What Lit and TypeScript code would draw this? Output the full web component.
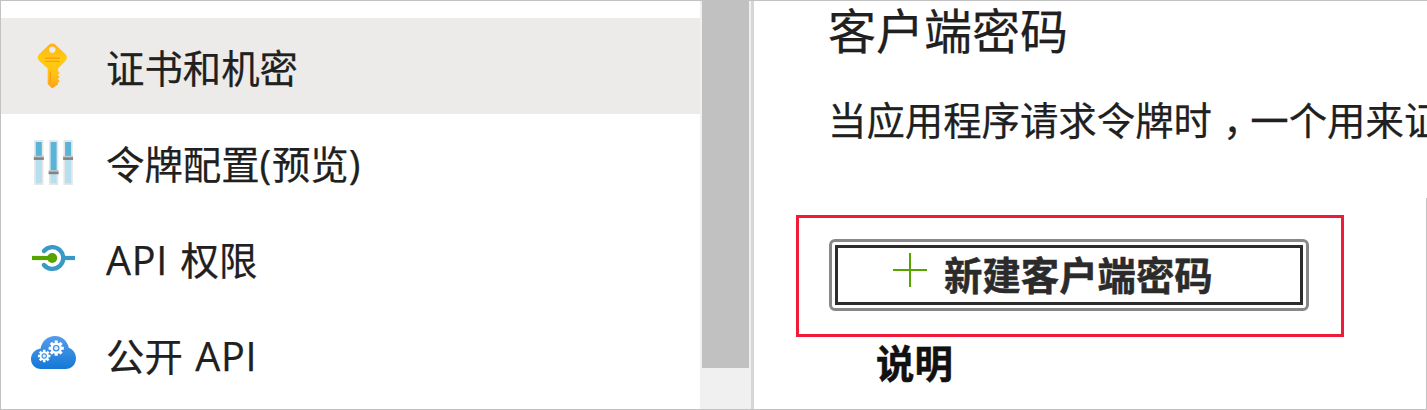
import { LitElement, html, css, svg } from "lit";
import { customElement } from "lit/decorators.js";
import { classMap } from "lit/directives/class-map.js";

const keyIcon = html`<svg class="icon" width="48" height="50" viewBox="0 0 48 50">
  <defs><linearGradient id="gold" x1="0" y1="0" x2="0" y2="1">
    <stop offset="0" stop-color="#ffb01c"/><stop offset=".35" stop-color="#ffcb10"/>
    <stop offset=".7" stop-color="#ffc213"/><stop offset="1" stop-color="#fea11b"/>
  </linearGradient></defs>
  <path fill="url(#gold)" fill-rule="evenodd" d="M20.3 3.5 Q23.3 1.3 26.3 3.5 L36.8 13.6 Q38.9 16.5 36.8 19.4 L29.1 27.4 V30 L30.7 32 L28.8 34 L30.7 36 L28.8 38 L30.7 40 L28.8 42 L29.3 43.3 L24.2 46.7 Q23.3 47.3 22.4 46.7 L18.7 43 V27.4 L9.8 19.4 Q7.7 16.5 9.8 13.6 Z M23.3 5.4 a3.3 3.3 0 1 0 .01 0 Z"/>
  <path d="M16.5 17.2H30.3M16.5 20.4H30.3" stroke="#f9a016" stroke-width="1.4" stroke-linecap="round"/>
  <path d="M21.3 31V42" stroke="#f9a016" stroke-width="1.5" stroke-linecap="round"/>
</svg>`;

const slider = (x: number, y: number) => svg`
  <rect x=${x} y="0" width="9.4" height="45" fill="#e6e6e6"/>
  <rect x=${x + 1.7} y="2" width="6" height=${y - 2} fill="#59b4d9"/>
  <rect x=${x + 1.7} y=${y} width="6" height=${43.3 - y} fill="#b8dff0"/>
  <rect x=${x - 0.3} y=${y - 1.2} width="10" height="1.6" fill="#c4c7c8"/>
  <rect x=${x - 0.3} y=${y + 0.3} width="10" height="2.6" fill="#7f8385"/>`;

const slidersIcon = html`<svg class="icon" width="48" height="45" viewBox="0 0 48 45">
  ${slider(5.1, 17)}${slider(19.9, 31.3)}${slider(34.4, 17)}
</svg>`;

const plugIcon = html`<svg class="icon" width="48" height="48" viewBox="0 0 48 48">
  <path d="M15 17A10.9 10.9 0 1 1 15 31" fill="none" stroke="#3999c6" stroke-width="4.3" stroke-linecap="round"/>
  <path d="M34 24H46" stroke="#3999c6" stroke-width="4.2"/>
  <path d="M3 24H24" stroke="#57a300" stroke-width="4.2"/>
  <circle cx="23.2" cy="24" r="5" fill="#57a300"/>
</svg>`;

const gear = (x: number, y: number, s: number) => svg`
  <g transform="translate(${x} ${y}) scale(${s})">
    <path stroke="#fff" stroke-width="3.1" d="M0-7.6V7.6M-7.6 0H7.6M-5.4-5.4L5.4 5.4M-5.4 5.4L5.4-5.4"/>
    <circle r="5.6" fill="#fff"/>
    <circle r="3.3" fill="#388ae2"/>
    <circle r="2.1" fill="#dcecfb"/>
  </g>`;

const cloudIcon = html`<svg class="icon" width="48" height="38" viewBox="0 0 48 38">
  <defs><linearGradient id="sky" x1="0" y1="0" x2="0" y2="1">
    <stop offset="0" stop-color="#559cec"/><stop offset="1" stop-color="#1478d6"/>
  </linearGradient></defs>
  <path fill="url(#sky)" d="M12 34C6 34 2 29.6 2 24C2 18.6 6 14 11.6 13.4C12.8 6.2 18.6 1 26 1C33 1 38.4 5.9 39.8 12.7C44 14.1 47 18.3 47 23.3C47 29.6 42.4 34 36.6 34Z"/>
  ${gear(27.2, 13.2, 1)}${gear(15.2, 21, 0.82)}
</svg>`;

interface NavEntry {
  label: string;
  icon: unknown;
  active?: boolean;
}

const entries: NavEntry[] = [
  { label: "证书和机密", icon: keyIcon, active: true },
  { label: "令牌配置(预览)", icon: slidersIcon },
  { label: "API 权限", icon: plugIcon },
  { label: "公开 API", icon: cloudIcon },
];

const renderLabel = (label: string) =>
  label
    .split(/([\x20-\x7e]+)/)
    .filter(Boolean)
    .map((part) => (/^[\x20-\x7e]/.test(part) ? html`<span class="latin">${part}</span>` : part));

@customElement("side-nav")
class SideNav extends LitElement {
  static styles = css`
    :host { display: block; width: 699px; padding-top: 17px; flex: none; }
    .item {
      display: flex; align-items: center; height: 96px;
      padding-left: 28px; font-size: 38.4px; line-height: 56px;
    }
    .active { background: #ecebe9; }
    .icon { display: block; flex: none; overflow: visible; }
    .label { margin-left: 29px; padding-top: 3px; white-space: pre; }
    .latin { font-size: 39.6px; line-height: 1; letter-spacing: 0.7px; word-spacing: 1.5px; }
  `;
  render() {
    return html`${entries.map(
      (e) => html`<div class=${classMap({ item: true, active: !!e.active })}>
        ${e.icon}<span class="label">${renderLabel(e.label)}</span>
      </div>`
    )}`;
  }
}

@customElement("secret-panel")
class SecretPanel extends LitElement {
  static styles = css`
    :host { display: block; flex: 1; min-width: 0; overflow: hidden; padding-left: 42px; }
    .title { margin: 0 0 0 32px; font-size: 48px; line-height: 60px; font-weight: 400; }
    .text { margin: 31px 0 0 32px; font-size: 38.4px; line-height: 56px; white-space: nowrap; }
    .comma { margin: 0 8.2px 0 11px; font-feature-settings: "halt"; }
    .highlight {
      box-sizing: border-box; width: 548px; height: 122px; margin-top: 67px;
      padding: 21px 30px; border: 3px solid #f01b38;
    }
    .button {
      box-sizing: border-box; display: block; width: 480px; height: 72px; margin: 0;
      padding: 3px; border: 3px solid #888; border-radius: 6px;
      background: #fff; font: inherit; color: #2b2b2b;
    }
    .inner {
      box-sizing: border-box; display: flex; align-items: center; height: 60px;
      padding-left: 55px; border: 3px solid #2d2d2d;
      font-size: 38.4px; font-weight: 700; line-height: 54px; white-space: nowrap;
    }
    .plus { flex: none; margin: 0 17px 10px 0; }
    .caption { -webkit-text-stroke: 0.5px currentColor; }
    .column {
      margin: -2px 0 0 80px; font-size: 38.4px; line-height: 56px; font-weight: 700;
      color: #111; -webkit-text-stroke: 0.5px currentColor;
    }
  `;
  render() {
    return html`
      <h2 class="title">客户端密码</h2>
      <p class="text">当应用程序请求令牌时<span class="comma">，</span>一个用来证</p>
      <div class="highlight">
        <button class="button">
          <span class="inner">
            <svg class="plus" width="34" height="34" viewBox="0 0 34 34">
              <path d="M17 0V34M0 17H34" stroke="#57a300" stroke-width="2" />
            </svg>
            <span class="caption">新建客户端密码</span>
          </span>
        </button>
      </div>
      <div class="column">说明</div>
    `;
  }
}

@customElement("app-root")
class AppRoot extends LitElement {
  static styles = css`
    :host {
      box-sizing: border-box; display: flex; width: 1427px; height: 410px; overflow: hidden;
      border: solid #c2c2c2; border-width: 1px 0 1px 1px; background: #fff; color: #202020;
      font-family: "Open Sans", "Noto Sans CJK SC", sans-serif;
      -webkit-text-stroke: 0.25px currentColor;
    }
    .track { box-sizing: border-box; flex: none; width: 51px; padding: 0 2px; background: #f0f0f0; }
    .thumb { height: 367px; background: #c1c1c1; }
    .divider { flex: none; width: 3px; background: #d6d6d6; }
    .edge { flex: none; width: 1px; margin-top: 197px; margin-left: -1px; background: #c2c2c2; }
  `;
  render() {
    return html`
      <side-nav></side-nav>
      <div class="track"><div class="thumb"></div></div>
      <div class="divider"></div>
      <secret-panel></secret-panel>
      <div class="edge"></div>
    `;
  }
}
